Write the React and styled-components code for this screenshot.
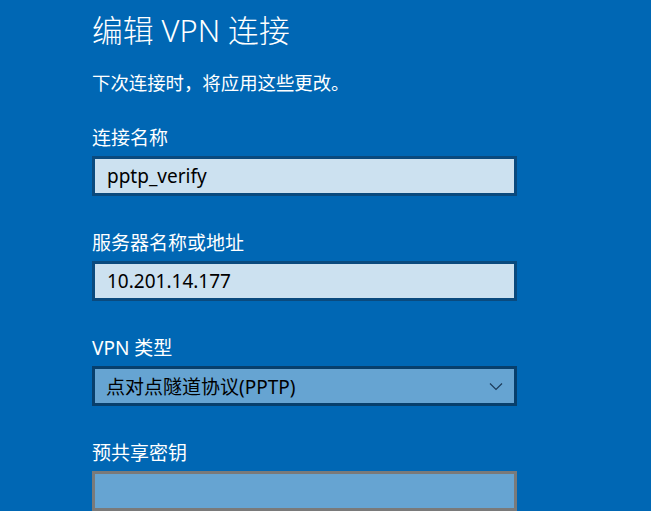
import React from "react";
import styled, { createGlobalStyle } from "styled-components";

const Global = createGlobalStyle`
  html, body {
    margin: 0;
    padding: 0;
    background: #0067b4;
    overflow: hidden;
  }
  body {
    font-family: "Noto Sans", "Noto Sans CJK SC", sans-serif;
  }
`;

const Page = styled.div`
  width: 651px;
  height: 511px;
  background: #0067b4;
  box-sizing: border-box;
  padding: 10px 0 0 92px;
  display: flex;
  flex-direction: column;
`;

const Title = styled.h1`
  margin: 0;
  font-size: 30.8px;
  line-height: 40px;
  font-weight: 300;
  color: #ffffff;
  font-family: "Noto Sans", "Noto Sans CJK SC", sans-serif;
`;

const Subtitle = styled.p`
  margin: 21px 0 0;
  font-size: 18.4px;
  line-height: 24px;
  color: #ffffff;
`;

const Field = styled.div`
  display: flex;
  flex-direction: column;
  margin-top: ${(p) => p.$top}px;
`;

const Label = styled.label`
  font-size: 19px;
  line-height: 24px;
  color: #ffffff;
  margin-bottom: 6px;
`;

const Box = styled.div`
  width: 425px;
  height: 40px;
  box-sizing: border-box;
  display: flex;
  align-items: center;
  padding: 0 11px 0 ${(p) => p.$pad}px;
  font-size: 19px;
  color: #000000;
  background: ${(p) => p.$bg};
  border: 3px solid ${(p) => p.$border};
`;

const Value = styled.span`
  flex: 1;
  white-space: nowrap;
`;

const Chevron = () => (
  <svg width="14" height="9" viewBox="0 0 14 9" aria-hidden="true">
    <polyline
      points="1,1.5 7,7.5 13,1.5"
      fill="none"
      stroke="#1c3b5a"
      strokeWidth="1.2"
    />
  </svg>
);

export default function App() {
  return (
    <>
      <Global />
      <Page>
        <Title>编辑 VPN 连接</Title>
        <Subtitle>下次连接时，将应用这些更改。</Subtitle>

        <Field $top={31}>
          <Label>连接名称</Label>
          <Box $bg="#cce1f0" $border="#0a4a7e" $pad={12}>
            <Value>pptp_verify</Value>
          </Box>
        </Field>

        <Field $top={35}>
          <Label>服务器名称或地址</Label>
          <Box $bg="#cce1f0" $border="#0a4a7e" $pad={12}>
            <Value>10.201.14.177</Value>
          </Box>
        </Field>

        <Field $top={35}>
          <Label>VPN 类型</Label>
          <Box $bg="#66a4d2" $border="#073f6c" $pad={11}>
            <Value>点对点隧道协议(PPTP)</Value>
            <Chevron />
          </Box>
        </Field>

        <Field $top={35}>
          <Label>预共享密钥</Label>
          <Box $bg="#66a4d2" $border="#7a7a7a" $pad={12} />
        </Field>
      </Page>
    </>
  );
}
